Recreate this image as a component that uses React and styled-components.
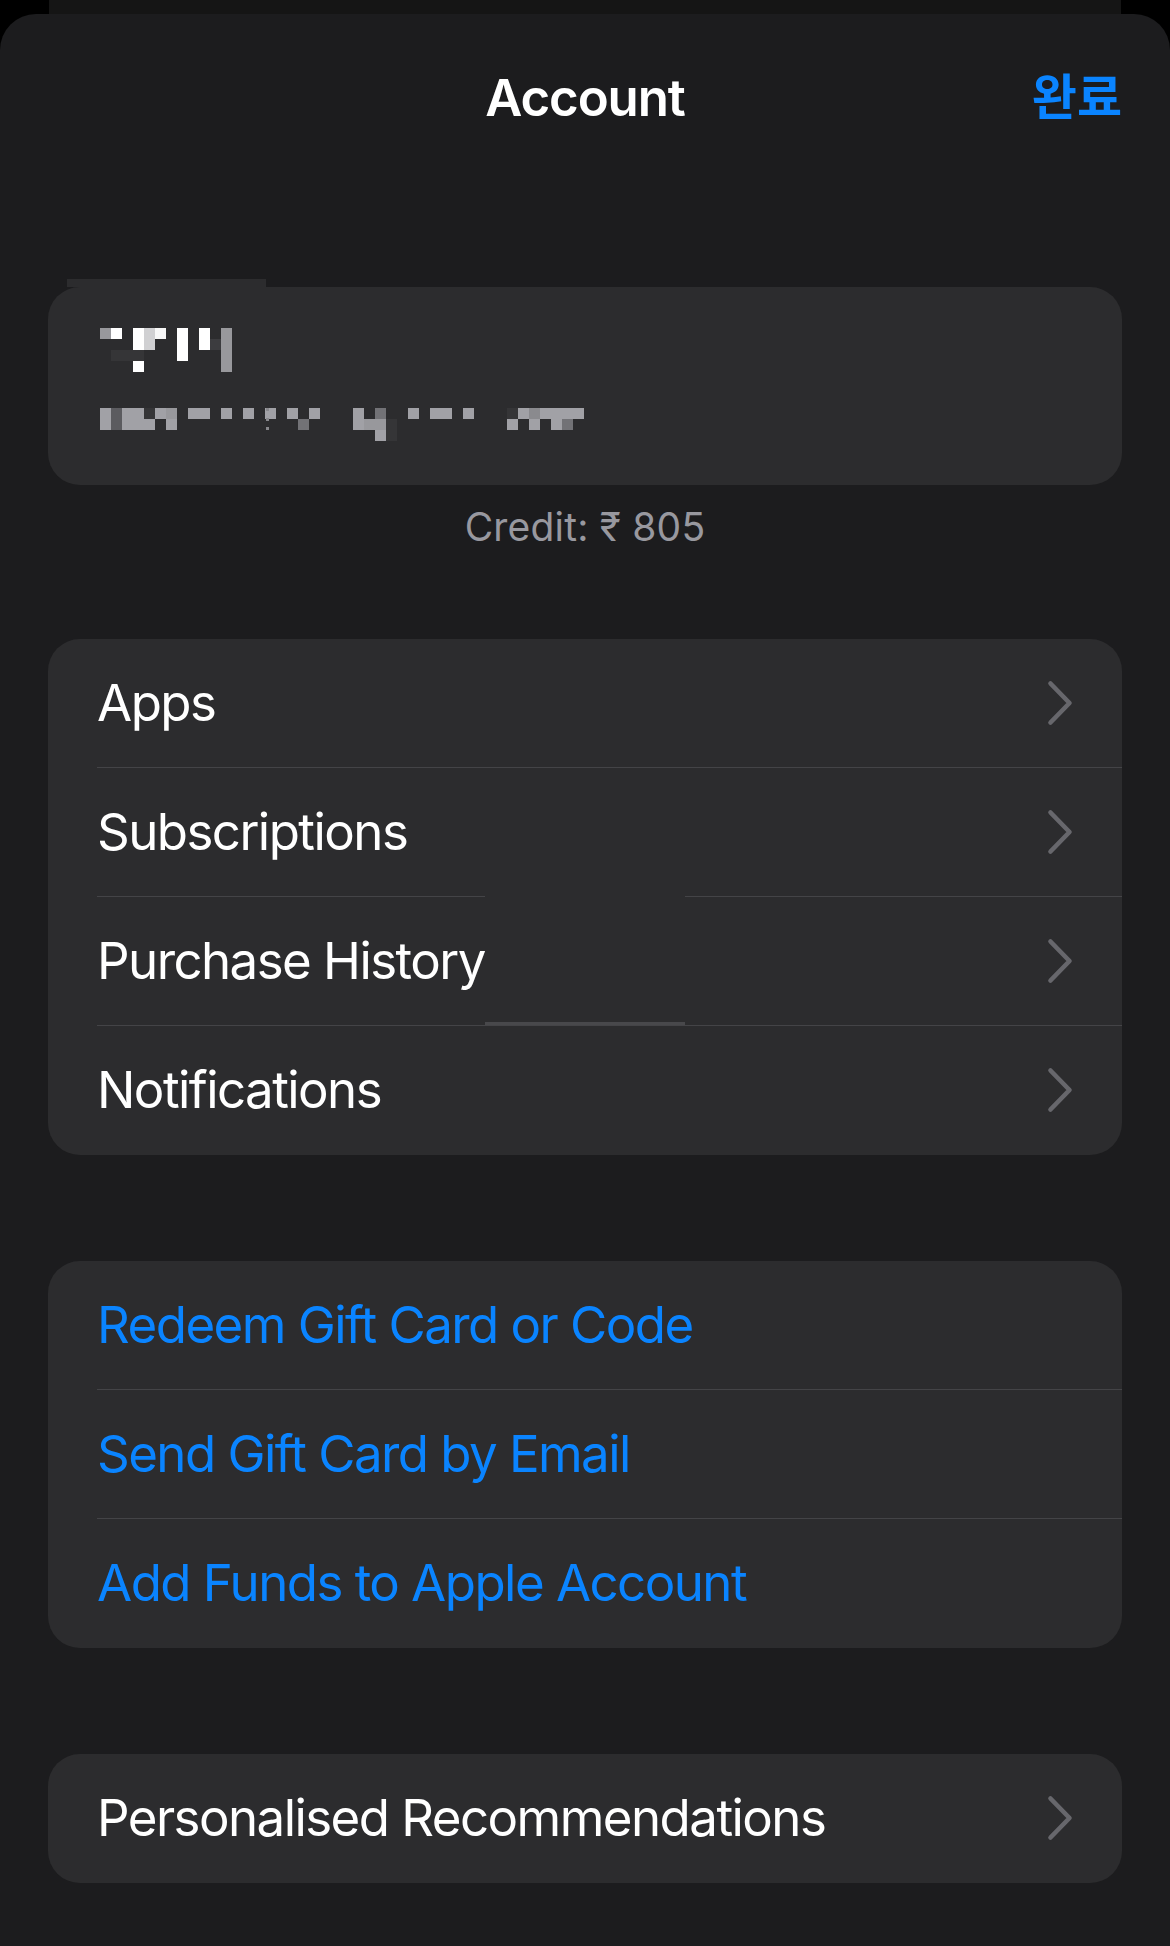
import React from "react";
import styled, { createGlobalStyle } from "styled-components";

const Global = createGlobalStyle`
  html, body { margin: 0; padding: 0; background: #000; }
  body { font-family: Inter, "Noto Sans CJK KR", sans-serif; -webkit-font-smoothing: antialiased; }
`;

const Page = styled.div`
  width: 1170px;
  height: 1946px;
  background: #000;
  display: flex;
  flex-direction: column;
  overflow: hidden;
`;

const BackSheet = styled.div`
  height: 14px;
  margin: 0 49px;
  background: #151515;
  flex-shrink: 0;
`;

const Sheet = styled.div`
  flex: 1;
  background: #1c1c1e;
  border-radius: 36px 36px 0 0;
  padding: 54px 48px 0;
  display: flex;
  flex-direction: column;
`;

const NavBar = styled.div`
  display: grid;
  grid-template-columns: 1fr auto 1fr;
  align-items: center;
  height: 60px;
`;

const Title = styled.div`
  grid-column: 2;
  font-size: 51px;
  line-height: 60px;
  font-weight: 600;
  color: #fff;
  letter-spacing: -1.1px;
`;

const Done = styled.div`
  grid-column: 3;
  justify-self: end;
  margin-right: 0;
  font-size: 49px;
  line-height: 60px;
  font-weight: 700;
  color: #0a84ff;
`;

const Tab = styled.div`
  width: 199px;
  height: 8px;
  margin: 151px 0 0 19px;
  background: #2c2c2e;
`;

const Card = styled.div`
  position: relative;
  background: #2c2c2e;
  border-radius: 32px;
  overflow: hidden;
  padding-bottom: 1px;
  margin-top: ${(p) => p.$top || 0}px;
`;

const ProfileCard = styled(Card)`
  height: 198px;
  box-sizing: border-box;
  padding: 41px 0 0 52px;
  display: flex;
  flex-direction: column;
  gap: 36px;
`;

const Credit = styled.div`
  margin-top: 18px;
  text-align: center;
  font-size: 39px;
  line-height: 48px;
  color: #98989f;
  letter-spacing: 0.2px;
`;

const Row = styled.div`
  height: 128px;
  display: flex;
  align-items: center;
  justify-content: space-between;
  padding: 0 49px 0 49px;
`;

const Label = styled.span`
  font-size: 51px;
  line-height: 60px;
  letter-spacing: -1.55px;
  color: ${(p) => (p.$tone === "blue" ? "#0a84ff" : "#ffffff")};
`;

const Separator = styled.div`
  height: 1px;
  margin-left: 49px;
  background: #444447;
`;

const Artifact = styled.div`
  position: absolute;
  left: 437px;
  width: 200px;
  top: ${(p) => p.$y}px;
  height: ${(p) => p.$h}px;
  background: ${(p) => p.$color};
`;

const ChevronSvg = styled.svg`
  flex-shrink: 0;
  display: block;
`;

const Chevron = () => (
  <ChevronSvg width="26" height="46" viewBox="0 0 26 46">
    <polyline
      points="3.5,3.5 22.5,23 3.5,42.5"
      fill="none"
      stroke="#67676c"
      strokeWidth="4.6"
      strokeLinecap="round"
      strokeLinejoin="round"
    />
  </ChevronSvg>
);

const W = "#ffffff";
const G = "#98989c";
const LG = "#d0d0d2";
const D = "#353537";
const L = "#a1a1a6";
const M = "#727276";
const DIM = "#5b5b5f";

const nameCells = [
  [0, 0, G], [1, 0, W], [3, 0, W], [4, 0, LG], [5, 0, "#f7f7f7"], [7, 0, W], [9, 0, W], [11, 0, G],
  [3, 1, W], [4, 1, LG], [7, 1, W], [9, 1, W], [10, 1, "#3c3c3f"], [11, 1, G],
  [1, 2, D], [2, 2, D], [3, 2, D], [7, 2, W], [11, 2, G],
  [3, 3, W], [11, 3, G],
];

const emailCells = [
  [0, 0, L], [1, 0, DIM], [2, 0, L], [3, 0, L], [4, 0, D], [5, 0, L], [6, 0, G],
  [8, 0, L], [9, 0, L], [11, 0, L], [13, 0, L], [15, 0, L], [17, 0, L], [19, 0, L],
  [23, 0, L], [25, 0, M], [28, 0, L], [30, 0, L], [31, 0, L], [33, 0, L],
  [37, 0, D], [38, 0, L], [39, 0, "#8a8a8e"], [40, 0, L], [41, 0, L], [42, 0, L], [43, 0, L],
  [0, 1, L], [1, 1, DIM], [2, 1, L], [3, 1, L], [4, 1, L], [6, 1, L], [18, 1, M],
  [23, 1, L], [24, 1, G], [25, 1, G], [26, 1, D], [37, 1, L], [39, 1, L], [41, 1, L], [42, 1, M],
  [25, 2, L], [26, 2, D],
];

const Mosaic = ({ cells, cols, rows, dots }) => (
  <svg width={cols * 11} height={rows * 11} viewBox={`0 0 ${cols * 11} ${rows * 11}`} style={{ display: "block" }}>
    {cells.map(([c, r, color], i) => (
      <rect key={i} x={c * 11} y={r * 11} width="11" height="11" fill={color} />
    ))}
    {dots &&
      dots.map(([x, y], i) => <rect key={`d${i}`} x={x} y={y} width="3" height="3" fill="#88888c" />)}
  </svg>
);

const ListCard = ({ items, top, children }) => (
  <Card $top={top}>
    {items.map((it, i) => (
      <React.Fragment key={it.label}>
        <Row>
          <Label $tone={it.tone}>{it.label}</Label>
          {it.chevron && <Chevron />}
        </Row>
        {i < items.length - 1 && <Separator />}
      </React.Fragment>
    ))}
    {children}
  </Card>
);

export default function App() {
  return (
    <Page>
      <Global />
      <BackSheet />
      <Sheet>
        <NavBar>
          <Title>Account</Title>
          <Done>완료</Done>
        </NavBar>
        <Tab />
        <ProfileCard>
          <Mosaic cells={nameCells} cols={12} rows={4} />
          <Mosaic cells={emailCells} cols={44} rows={3} dots={[[166, 0], [166, 10], [166, 19]]} />
        </ProfileCard>
        <Credit>Credit: ₹ 805</Credit>
        <ListCard
          top={88}
          items={[
            { label: "Apps", chevron: true },
            { label: "Subscriptions", chevron: true },
            { label: "Purchase History", chevron: true },
            { label: "Notifications", chevron: true },
          ]}
        >
          <Artifact $y={257} $h={1} $color="#2c2c2e" />
          <Artifact $y={383} $h={3} $color="#48484b" />
        </ListCard>
        <ListCard
          top={106}
          items={[
            { label: "Redeem Gift Card or Code", tone: "blue" },
            { label: "Send Gift Card by Email", tone: "blue" },
            { label: "Add Funds to Apple Account", tone: "blue" },
          ]}
        />
        <ListCard top={106} items={[{ label: "Personalised Recommendations", chevron: true }]} />
      </Sheet>
    </Page>
  );
}
